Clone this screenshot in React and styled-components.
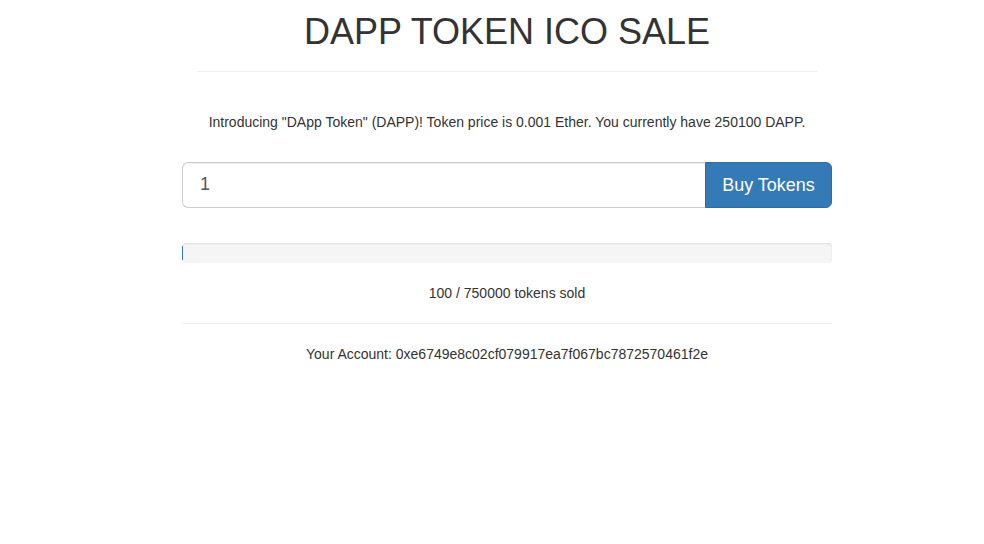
import React from "react";
import styled, { createGlobalStyle } from "styled-components";

const GlobalStyle = createGlobalStyle`
  html, body {
    margin: 0;
    padding: 0;
    background: #fff;
  }
  body {
    font-family: "Liberation Sans", Arial, Helvetica, sans-serif;
    font-size: 14px;
    line-height: 1.42857143;
    color: #333;
  }
  * {
    box-sizing: border-box;
  }
`;

const Page = styled.div`
  display: flex;
  justify-content: center;
  padding-left: 30px;
`;

const Container = styled.div`
  width: 650px;
  text-align: center;
`;

const Header = styled.div`
  width: 620px;
  margin: 0 auto;
  padding-top: 12px;
  padding-bottom: 19px;
  border-bottom: 1px solid #eee;
`;

const Title = styled.h1`
  margin: 0;
  font-size: 36px;
  font-weight: 500;
  line-height: 1.1;
  color: #333;
`;

const Intro = styled.p`
  margin: 40px 0 30px;
`;

const InputGroup = styled.form`
  display: flex;
  height: 46px;
  margin: 0;
`;

const AmountInput = styled.input`
  flex: 1;
  min-width: 0;
  height: 46px;
  padding: 10px 17px;
  font-family: inherit;
  font-size: 18px;
  line-height: 1.3333333;
  color: #555;
  background: #fff;
  border: 1px solid #ccc;
  border-right: none;
  border-radius: 6px 0 0 6px;
  box-shadow: inset 0 1px 1px rgba(0, 0, 0, 0.075);
  outline: none;
`;

const BuyButton = styled.button`
  width: 127px;
  height: 46px;
  padding: 10px 16px;
  font-family: inherit;
  font-size: 18px;
  line-height: 1.3333333;
  color: #fff;
  background: #337ab7;
  border: 1px solid #2e6da4;
  border-radius: 0 6px 6px 0;
  cursor: pointer;
`;

const Progress = styled.div`
  height: 20px;
  margin: 35px 0 20px;
  overflow: hidden;
  background: #f5f5f5;
  border-radius: 4px;
  box-shadow: inset 0 1px 2px rgba(0, 0, 0, 0.1);
  display: flex;
  align-items: center;
`;

const ProgressFill = styled.div`
  height: 14px;
  min-width: 1px;
  background: #337ab7;
`;

const Sold = styled.p`
  margin: 0 0 20px;
`;

const Divider = styled.hr`
  margin: 0;
  border: 0;
  border-top: 1px solid #eee;
`;

const Account = styled.p`
  margin: 20px 0 0;
`;

const sold = 100;
const total = 750000;

export default function App() {
  return (
    <>
      <GlobalStyle />
      <Page>
        <Container>
          <Header>
            <Title>DAPP TOKEN ICO SALE</Title>
          </Header>
          <Intro>
            Introducing "DApp Token" (DAPP)! Token price is 0.001 Ether. You
            currently have 250100 DAPP.
          </Intro>
          <InputGroup onSubmit={(e) => e.preventDefault()}>
            <AmountInput type="number" defaultValue="1" min="1" />
            <BuyButton type="submit">Buy Tokens</BuyButton>
          </InputGroup>
          <Progress>
            <ProgressFill style={{ width: `${(sold / total) * 100}%` }} />
          </Progress>
          <Sold>
            {sold} / {total} tokens sold
          </Sold>
          <Divider />
          <Account>
            Your Account: 0xe6749e8c02cf079917ea7f067bc7872570461f2e
          </Account>
        </Container>
      </Page>
    </>
  );
}
